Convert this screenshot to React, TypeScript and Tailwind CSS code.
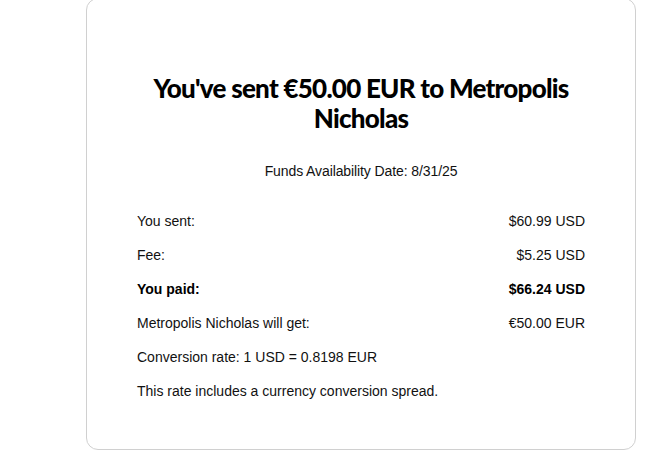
export default function App() {
  const rows: { label: string; value?: string; bold?: boolean }[] = [
    { label: "You sent:", value: "$60.99 USD" },
    { label: "Fee:", value: "$5.25 USD" },
    { label: "You paid:", value: "$66.24 USD", bold: true },
    { label: "Metropolis Nicholas will get:", value: "€50.00 EUR" },
    { label: "Conversion rate: 1 USD = 0.8198 EUR" },
    { label: "This rate includes a currency conversion spread." },
  ];

  return (
    <div className="min-h-[474px] w-[656px] bg-white overflow-hidden">
      <div className="ml-[86px] mt-[-2px] w-[550px] rounded-xl border border-[#d0d0d0] bg-white pl-[50px] pr-[50px] pt-[74px] pb-[41px]">
        <h1
          className="text-center text-[26px] leading-[30px] font-black tracking-[-0.75px] text-black"
          style={{ fontFamily: "Lato, sans-serif" }}
        >
          You've sent €50.00 EUR to Metropolis Nicholas
        </h1>
        <p
          className="mt-[28px] text-center text-[14px] leading-[20px] tracking-[-0.1px] text-[#111]"
          style={{ fontFamily: '"Liberation Sans", Arial, sans-serif' }}
        >
          Funds Availability Date: 8/31/25
        </p>
        <div
          className="mt-[23px] text-[14px] text-[#111]"
          style={{ fontFamily: '"Liberation Sans", Arial, sans-serif' }}
        >
          {rows.map((r) => (
            <div
              key={r.label}
              className={`flex justify-between leading-[34px] ${r.bold ? "font-bold text-black" : ""}`}
            >
              <span>{r.label}</span>
              {r.value && <span>{r.value}</span>}
            </div>
          ))}
        </div>
      </div>
    </div>
  );
}
